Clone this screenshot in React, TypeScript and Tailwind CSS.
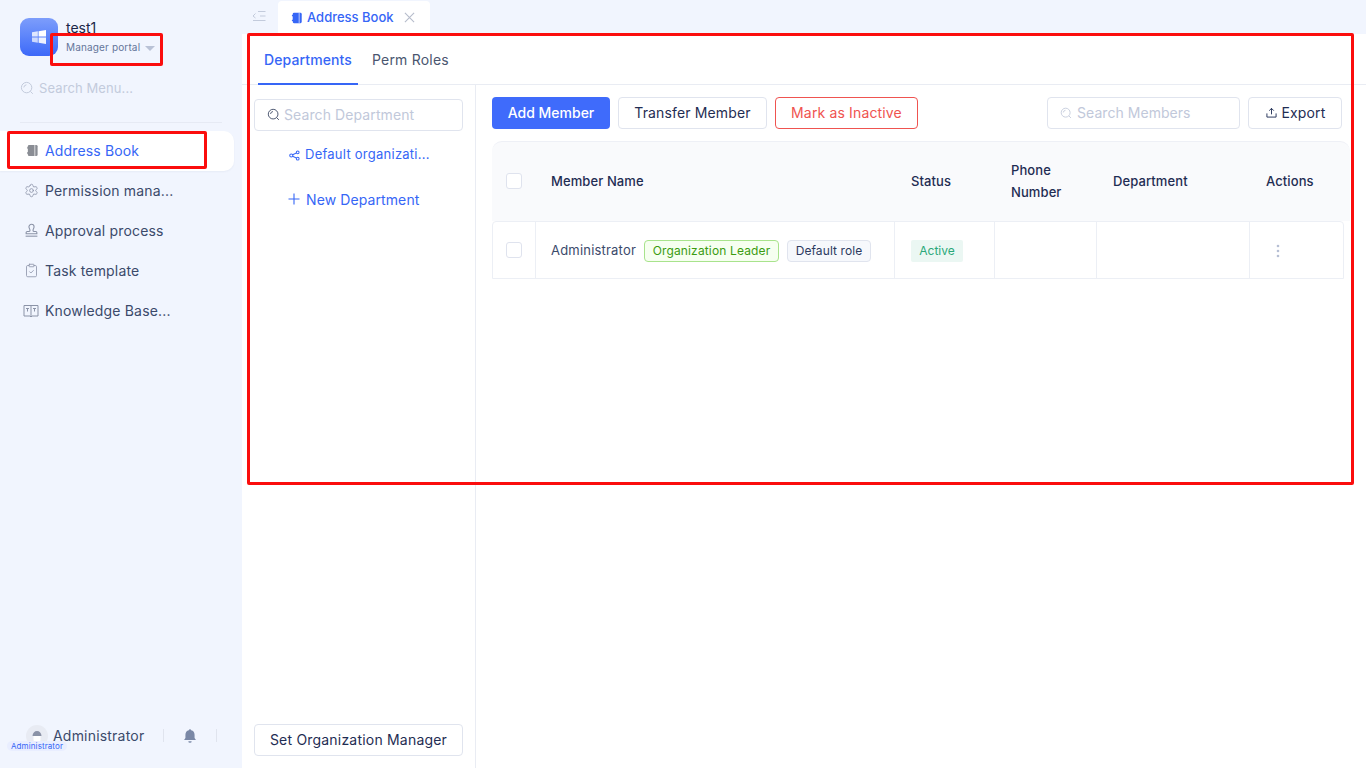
import React from "react";
import { Settings, ClipboardCheck } from "lucide-react";

const AddressIcon = ({ className = "" }: { className?: string }) => (
  <svg viewBox="0 0 14 14" className={className} fill="currentColor">
    <rect x="2" y="1" width="10.5" height="12" rx="1.5" />
    <rect x="1" y="3.5" width="2.4" height="1.4" rx=".6" />
    <rect x="1" y="9" width="2.4" height="1.4" rx=".6" />
    <rect x="9" y="1" width="1" height="12" fill="#ffffff" opacity=".75" />
  </svg>
);

const Search = ({ className = "" }: { className?: string }) => (
  <svg viewBox="0 0 14 14" className={className} fill="none" stroke="currentColor" strokeWidth="1">
    <circle cx="6.6" cy="6.6" r="5.2" />
    <path d="M10.4 10.4 12.8 12.8M3.8 6.4a3 3 0 0 1 2.6-2.6" />
  </svg>
);

const MenuItem = ({ icon, label }: { icon: React.ReactNode; label: string }) => (
  <div className="flex h-10 items-center pb-[1px] pl-[23px] text-[14px] tracking-[0.17px] text-[#3b4a6b]">
    <span className="flex w-[22px] shrink-0 items-center">{icon}</span>
    <span>{label}</span>
  </div>
);

const Th = ({ className = "", children }: { className?: string; children?: React.ReactNode }) => (
  <div className={`flex items-center text-[13px] font-medium leading-[22px] tracking-[0.1px] text-[#1f2d53] ${className}`}>{children}</div>
);

const Checkbox = () => <span className="block h-4 w-4 rounded-[3px] border border-[#dfe3ee] bg-white" />;

export default function App() {
  return (
    <div
      className="relative flex h-[768px] w-[1366px] overflow-hidden bg-white"
      style={{ fontFamily: "Inter, 'Liberation Sans', sans-serif" }}
    >
      {/* sidebar */}
      <aside className="flex w-[242px] shrink-0 flex-col bg-[#f1f5fe]">
        <div className="flex items-start pl-5 pt-[18px]">
          <div className="flex h-[38px] w-[38px] items-center justify-center rounded-[9px] bg-gradient-to-b from-[#7d9dfb] to-[#3d68f8]">
            <svg viewBox="0 0 16 16" className="h-[16px] w-[16px]" fill="#ffffff">
              <path d="M1 3.2 6.8 2.3v5.3H1z" opacity=".8" />
              <path d="M7.6 2.2 15 1v6.6H7.6z" />
              <path d="M1 8.4h5.8v5.3L1 12.8z" opacity=".7" />
              <path d="M7.6 8.4H15V15l-7.4-1.2z" opacity=".9" />
            </svg>
          </div>
          <div className="ml-2">
            <div className="text-[14px] leading-[20px] text-[#1a2748]">test1</div>
            <div className="flex items-center text-[10px] leading-[18px] tracking-[0.15px] text-[#64759a]">
              Manager portal
              <span className="ml-[5px] mt-[3px] h-0 w-0 border-x-[5px] border-t-[5px] border-x-transparent border-t-[#b9c2d6]" />
            </div>
          </div>
        </div>

        <div className="mt-[22px] flex items-center pl-[20px] text-[13px] leading-[20px] tracking-[0.1px] text-[#c3cbdc]">
          <Search className="mr-[5px] h-[14px] w-[14px]" />
          Search Menu...
        </div>

        <div className="mx-5 mt-[24px] h-px w-[202px] bg-[#e6eaf4]" />

        <div className="mt-2 flex h-10 w-[234px] items-center rounded-r-[10px] bg-white pb-[1px] pl-[26px] text-[14px] tracking-[0.15px] text-[#3666f6] shadow-[0_1px_2px_rgba(30,50,100,0.05)]">
          <AddressIcon className="mr-[6px] h-[13px] w-[13px] text-[#8a8d94]" />
          Address Book
        </div>

        <MenuItem
          label="Permission mana..."
          icon={<Settings className="ml-[1px] h-[15px] w-[15px] text-[#8b93a7]" strokeWidth={1.3} />}
        />
        <MenuItem
          label="Approval process"
          icon={
            <svg viewBox="0 0 14 14" className="ml-[1px] h-[15px] w-[15px]" fill="none" stroke="#8b93a7" strokeWidth="1">
              <path d="M7 1.200a2.400 2.400 0 0 0-2.400 2.400c0 1.600 1 2 1 3.400 0 .6-.4.9-1.200.9H3a1 1 0 0 0-1 1V10h10V8.900a1 1 0 0 0-1-1H9.600c-.8 0-1.200-.3-1.200-.9 0-1.400 1-1.800 1-3.400A2.400 2.400 0 0 0 7 1.200Z" />
              <path d="M1.500 12.300h11" />
            </svg>
          }
        />
        <MenuItem
          label="Task template"
          icon={<ClipboardCheck className="ml-[1px] h-[15px] w-[15px] text-[#8b93a7]" strokeWidth={1.3} />}
        />
        <MenuItem
          label="Knowledge Base..."
          icon={
            <svg viewBox="0 0 16 14" className="h-[14px] w-[16px]" fill="none" stroke="#8b93a7" strokeWidth="1">
              <path d="M8 1.500H1v10.500h6l1 1 1-1h6V1.500H8Zm0 0V13" />
              <path d="M3 4.500h3M4.500 4.500V7.500M10 4.500h3M11.500 4.500V7.500" />
            </svg>
          }
        />

        <div className="mt-auto flex h-[64px] items-start pl-[26px] pt-[21px]">
          <div className="relative flex h-[22px] w-[22px] items-center justify-center overflow-visible rounded-full bg-[#e8ebf3]">
            <svg viewBox="0 0 22 22" className="h-[22px] w-[22px]">
              <path d="M6.500 11c0-3 2-5 4.500-5s4.500 2 4.500 5z" fill="#8b93a7" />
              <path d="M7.500 11h7v3.500a3.500 3.500 0 0 1-7 0z" fill="#ffffff" />
            </svg>
            <span className="absolute left-[-19px] top-[16px] whitespace-nowrap rounded-[6px] bg-[#e9eeff] px-1 text-[8px] leading-[10px] tracking-[0.1px] text-[#3666f6]">
              Administrator
            </span>
          </div>
          <span className="ml-[5px] text-[14px] leading-[22px] tracking-[0.2px] text-[#3b4a6b]">Administrator</span>
          <span className="ml-[19px] mt-[4px] h-[13px] w-px bg-[#e0e4ee]" />
          <svg viewBox="0 0 14 14" className="ml-[18px] mt-[3px] h-[16px] w-[16px]" fill="#7a88a6">
            <path d="M7 1a1 1 0 0 1 1 .9c2 .4 3 2 3 3.900v3l1.200 1.700H1.800L3 8.800v-3c0-1.900 1-3.500 3-3.900A1 1 0 0 1 7 1Z" />
            <path d="M5.500 11.500h3a1.500 1.500 0 0 1-3 0Z" />
          </svg>
          <span className="ml-[18px] mt-[4px] h-[13px] w-px bg-[#e0e4ee]" />
        </div>
      </aside>

      {/* main */}
      <div className="flex min-w-0 flex-1 flex-col">
        <div className="flex h-[34px] shrink-0 items-end bg-[#f1f5fe]">
          <div className="flex h-[34px] w-[36px] items-center justify-center">
            <svg viewBox="0 0 14 12" className="mb-[2px] ml-[-2px] h-[12px] w-[14px]" fill="none" stroke="#c3cbdc" strokeWidth="1">
              <path d="M6 1.500h7.500M8 6h5.500M1 10.500h12.500M3.500 3.500 1 6l2.500 2" />
            </svg>
          </div>
          <div className="flex h-[33px] w-[152px] items-center rounded-t-[4px] bg-white pl-[13px] text-[13px] font-medium text-[#3666f6]">
            <AddressIcon className="mr-[4px] h-[12px] w-[12px] text-[#3666f6]" />
            Address Book
            <svg viewBox="0 0 12 12" className="ml-[10px] h-[11px] w-[11px]" fill="none" stroke="#b6bccb" strokeWidth="1.200">
              <path d="m1 1 10 10M11 1 1 11" />
            </svg>
          </div>
        </div>

        <div className="flex h-[51px] shrink-0 border-b border-[#e9ecf3] pl-[14px] text-[14px] tracking-[0.1px]">
          <div className="relative flex w-[104px] items-center justify-center font-medium text-[#3666f6]">
            Departments
            <span className="absolute bottom-[-1px] left-[2px] h-[2px] w-[100px] bg-[#3666f6]" />
          </div>
          <div className="ml-[12px] flex items-center tracking-[0.2px] text-[#4a566f]">Perm Roles</div>
        </div>

        <div className="flex min-h-0 flex-1">
          {/* departments */}
          <div className="flex w-[234px] shrink-0 flex-col border-r border-[#e9ecf3] px-3 pb-3 pt-[14px]">
            <div className="flex h-8 w-[209px] items-center rounded-[4px] border border-[#e0e4ee] pb-[1px] pl-3 text-[14px] tracking-[0.1px] text-[#c1c8da]">
              <Search className="mr-[4px] h-[13px] w-[13px] text-[#414d68]" />
              Search Department
            </div>
            <div className="mt-[14px] flex h-[20px] items-center pl-[35px] text-[13px] tracking-[0.25px] text-[#3666f6]">
              <svg viewBox="0 0 12 12" className="mr-[5px] h-[11px] w-[11px]" fill="none" stroke="#3666f6" strokeWidth="1.100">
                <circle cx="2.500" cy="6" r="1.700" />
                <circle cx="9.500" cy="2.500" r="1.500" />
                <circle cx="9.500" cy="9.500" r="1.500" />
                <path d="M4 5.200 8 3.200M4 6.800l4 2" />
              </svg>
              Default organizati...
            </div>
            <div className="mt-[24px] flex h-5 items-center pl-[34px] text-[14px] tracking-[0.1px] text-[#3666f6]">
              <svg viewBox="0 0 12 12" className="mr-[6px] h-3 w-3" fill="none" stroke="#3666f6" strokeWidth="1.100">
                <path d="M6 .5v11M.5 6h11" />
              </svg>
              New Department
            </div>
            <button className="mt-auto flex h-8 w-[209px] items-center justify-center rounded-[4px] border border-[#e0e4ee] pb-[2px] text-[14px] tracking-[0.2px] text-[#1f2d53]">
              Set Organization Manager
            </button>
          </div>

          {/* members */}
          <div className="min-w-0 flex-1 pl-4 pr-[24px] pt-3">
            <div className="flex h-8 items-center gap-2 text-[14px] tracking-[0.15px]">
              <button className="h-8 w-[118px] rounded-[4px] bg-[#3f6bfb] pb-[2px] font-medium tracking-[0px] text-white">Add Member</button>
              <button className="h-8 w-[149px] rounded-[4px] border border-[#e0e4ee] pb-[2px] text-[#1f2d53]">Transfer Member</button>
              <button className="h-8 w-[143px] rounded-[4px] border border-[#ef5350] pb-[2px] text-[#ef5350]">Mark as Inactive</button>
              <div className="ml-auto flex h-8 w-[193px] items-center rounded-[4px] border border-[#e0e4ee] pb-[1px] pl-3 tracking-[0.05px] text-[#c1c8da]">
                <Search className="mr-[5px] h-[12px] w-[12px]" />
                Search Members
              </div>
              <button className="flex h-8 w-[94px] items-center justify-center rounded-[4px] border border-[#e0e4ee] pb-[1px] pl-[1px] text-[#1f2d53]">
                <svg viewBox="0 0 12 12" className="mr-[5px] h-[11px] w-[11px]" fill="none" stroke="#1f2d53" strokeWidth="1">
                  <path d="M6 8V1.500M3.500 4 6 1.500 8.500 4M1 7v4h10V7" />
                </svg>
                Export
              </button>
            </div>

            <div className="mt-3 w-[858px]">
              <div className="grid h-[80px] w-[858px] grid-cols-[44px_359px_100px_102px_153px_100px] rounded-t-[10px] border-t border-[#eef0f6] bg-[#f9fafc] pb-[2px]">
                <div className="flex items-center pl-[14px]"><Checkbox /></div>
                <Th className="pl-[15px]">Member Name</Th>
                <Th className="pl-4">Status</Th>
                <Th className="w-[70px] pl-4">Phone Number</Th>
                <Th className="pl-4">Department</Th>
                <Th className="pl-[16px]">Actions</Th>
              </div>
              <div className="grid h-[58px] w-[852px] grid-cols-[43px_359px_100px_102px_153px_94px] rounded-t-[4px] border-x border-y border-[#eceff5]">
                <div className="flex items-center border-r border-[#eceff5] pl-[13px]"><Checkbox /></div>
                <div className="flex items-center whitespace-nowrap border-r border-[#eceff5] pl-[15px] pt-[1px] text-[13px] tracking-[0.2px] text-[#3b4a6b]">
                  Administrator
                  <span className="ml-2 flex h-[22px] w-[135px] items-center justify-center rounded-[4px] border border-[#a8e38c] bg-[#f6fff0] text-[12px] tracking-[0.15px] text-[#3b9c10]">
                    Organization Leader
                  </span>
                  <span className="ml-2 flex h-[22px] w-[84px] items-center justify-center rounded-[4px] border border-[#e0e4ee] bg-[#f6f8fc] text-[12px] tracking-[0.1px] text-[#2c3a5f]">
                    Default role
                  </span>
                </div>
                <div className="flex items-center border-r border-[#eceff5] pl-4 pt-[1px]">
                  <span className="flex h-[22px] w-[52px] items-center justify-center rounded-[2px] bg-[#ebf7f3] text-[12px] text-[#2aa87a]">Active</span>
                </div>
                <div className="border-r border-[#eceff5]" />
                <div className="border-r border-[#eceff5]" />
                <div className="flex items-center pl-[26px] pt-[1px]">
                  <svg viewBox="0 0 4 14" className="h-[14px] w-1" fill="#b6bfd4">
                    <circle cx="2" cy="2" r="1.300" />
                    <circle cx="2" cy="7" r="1.300" />
                    <circle cx="2" cy="12" r="1.300" />
                  </svg>
                </div>
              </div>
            </div>
          </div>
        </div>
      </div>

      {/* annotations */}
      <div className="pointer-events-none absolute left-[50px] top-[33px] h-[33px] w-[113px] rounded-[2px] border-[3px] border-[#fb0d0d]" />
      <div className="pointer-events-none absolute left-[7px] top-[131px] h-[38px] w-[200px] rounded-[2px] border-[3px] border-[#fb0d0d]" />
      <div className="pointer-events-none absolute left-[247px] top-[33px] h-[452px] w-[1107px] rounded-[2px] border-[3px] border-[#fb0d0d]" />
    </div>
  );
}
